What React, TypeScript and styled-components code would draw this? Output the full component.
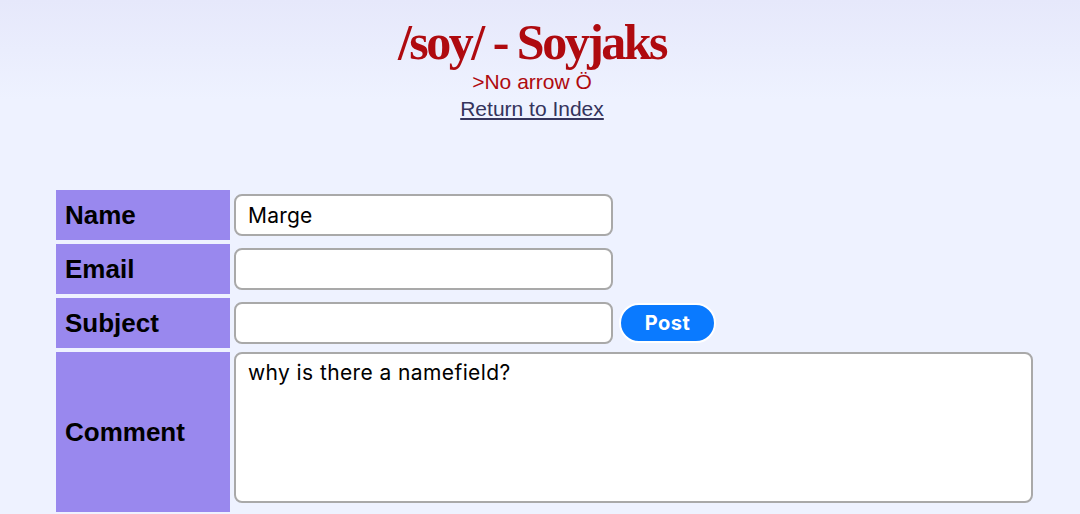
import React from "react";
import styled, { createGlobalStyle } from "styled-components";

const Global = createGlobalStyle`
  html, body { margin: 0; padding: 0; }
  body {
    background: linear-gradient(#e6e8fb 0px, #eef2ff 100px, #eef2ff 100%);
    min-height: 514px;
    font-family: "Liberation Sans", Arial, sans-serif;
  }
`;

const Page = styled.div`
  display: flex;
  flex-direction: column;
  padding-top: 15px;
`;

const Header = styled.header`
  display: flex;
  flex-direction: column;
  align-items: center;
  margin-right: 16px;
`;

const Title = styled.h1`
  margin: 0;
  font-family: "Liberation Serif", "Times New Roman", serif;
  font-weight: bold;
  font-size: 50px;
  line-height: 55px;
  letter-spacing: -2.5px;
  color: #af0a0f;
`;

const Subtitle = styled.div`
  font-size: 21px;
  line-height: 24px;
  color: #af0a0f;
`;

const IndexLink = styled.a`
  font-size: 21px;
  line-height: 30px;
  color: #34345c;
  text-decoration: underline;
  text-underline-offset: 2px;
`;

const Form = styled.form`
  display: grid;
  grid-template-columns: 174px auto;
  row-gap: 4px;
  column-gap: 4px;
  margin: 66px 0 0 56px;
  justify-content: start;
`;

const Label = styled.div<{ $tall?: boolean }>`
  background: #9988ee;
  display: flex;
  align-items: center;
  padding-left: 9px;
  font-weight: bold;
  font-size: 26px;
  color: #000;
  height: ${(p) => (p.$tall ? "160px" : "50px")};
  box-sizing: border-box;
`;

const Cell = styled.div<{ $top?: boolean }>`
  display: flex;
  align-items: ${(p) => (p.$top ? "flex-start" : "center")};
  gap: 6px;
`;

const TextInput = styled.input`
  width: 379px;
  height: 42px;
  box-sizing: border-box;
  border: 2px solid #a9a9a9;
  border-radius: 8px;
  background: #fff;
  padding: 0 12px;
  font-family: Inter, "Noto Sans", sans-serif;
  font-size: 21px;
  letter-spacing: 0.2px;
  color: #000;
  outline: none;
`;

const TextArea = styled.textarea`
  width: 799px;
  height: 151px;
  box-sizing: border-box;
  border: 2px solid #a9a9a9;
  border-radius: 8px;
  background: #fff;
  padding: 6px 12px;
  font-family: Inter, "Noto Sans", sans-serif;
  font-size: 21px;
  letter-spacing: 0.4px;
  line-height: 26px;
  color: #000;
  resize: none;
  outline: none;
`;

const PostButton = styled.button`
  width: 97px;
  height: 40px;
  box-sizing: border-box;
  border: 2px solid #fff;
  border-radius: 20px;
  background: #0a7aff;
  color: #fff;
  font-family: Inter, "Noto Sans", sans-serif;
  font-weight: bold;
  font-size: 20px;
  letter-spacing: 0.5px;
  cursor: pointer;
`;

export default function App() {
  return (
    <>
      <Global />
      <Page>
        <Header>
          <Title>/soy/ - Soyjaks</Title>
          <Subtitle>&gt;No arrow Ö</Subtitle>
          <IndexLink href="#">Return to Index</IndexLink>
        </Header>
        <Form onSubmit={(e) => e.preventDefault()}>
          <Label>Name</Label>
          <Cell>
            <TextInput defaultValue="Marge" />
          </Cell>
          <Label>Email</Label>
          <Cell>
            <TextInput />
          </Cell>
          <Label>Subject</Label>
          <Cell>
            <TextInput />
            <PostButton type="submit">Post</PostButton>
          </Cell>
          <Label $tall>Comment</Label>
          <Cell $top>
            <TextArea defaultValue="why is there a namefield?" />
          </Cell>
        </Form>
      </Page>
    </>
  );
}
